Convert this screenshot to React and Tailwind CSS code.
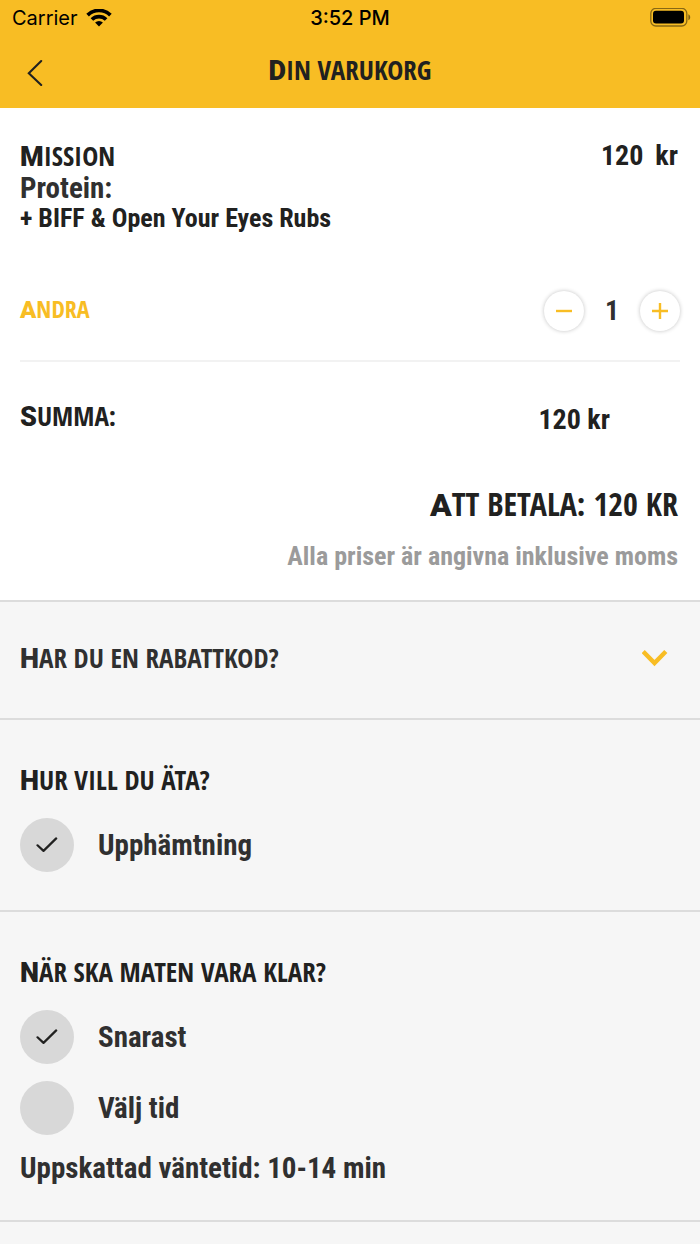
import { useState } from 'react';

const UNIT_PRICE = 120;

function DisplayText({ as: Tag = 'h2', className = '', children }) {
  return (
    <Tag
      className={`font-[family-name:'Open_Sans_Condensed','Roboto_Condensed',sans-serif] font-extrabold uppercase first-letter:font-[family-name:Roboto] first-letter:leading-none first-letter:font-black ${className}`}
    >
      {children}
    </Tag>
  );
}

function WifiIcon() {
  return (
    <svg viewBox="0 0 26 19" className="h-[19px] w-[26px]" aria-hidden="true">
      <g fill="none" stroke="#000" strokeWidth="3.7">
        <path d="M1.6 6.1a16.2 16.2 0 0 1 22.8 0" />
        <path d="M5.9 10.5a10.1 10.1 0 0 1 14.2 0" />
      </g>
      <path d="M13 17.4l-3.9-3.9a5.6 5.6 0 0 1 7.8 0z" />
    </svg>
  );
}

function BatteryIcon() {
  return (
    <svg viewBox="0 0 42 20" className="h-5 w-[42px]" aria-hidden="true">
      <rect x="0.8" y="0.4" width="36" height="17.6" rx="5" fill="none" stroke="#000" strokeOpacity="0.45" strokeWidth="1.3" />
      <rect x="3" y="2.8" width="31" height="12.8" rx="3" />
      <path d="M38.4 6.2c2.4 1 2.4 5 0 6z" fillOpacity="0.5" />
    </svg>
  );
}

function Option({ name, label, checked }) {
  return (
    <label className="flex items-center gap-6 text-[29px] leading-8 font-bold text-[#303030]">
      <span className="grid size-[54px] place-items-center">
        <input
          type="radio"
          name={name}
          defaultChecked={checked}
          className="peer col-start-1 row-start-1 size-[54px] appearance-none rounded-full bg-[#d8d8d8]"
        />
        <svg
          viewBox="0 0 22 16"
          className="pointer-events-none col-start-1 row-start-1 hidden h-4 w-[22px] peer-checked:block"
          fill="none"
          stroke="#212120"
          strokeWidth="2.2"
          strokeLinecap="round"
          strokeLinejoin="round"
          aria-hidden="true"
        >
          <path d="M1.5 8.3l6 5.6L20.2 1.4" />
        </svg>
      </span>
      {label}
    </label>
  );
}

function StepButton({ label, onClick, children }) {
  return (
    <button
      type="button"
      aria-label={label}
      onClick={onClick}
      className="grid size-10 place-items-center rounded-full bg-white shadow-[0_0_4px_rgba(0,0,0,0.24)]"
    >
      <svg viewBox="0 0 16 16" className="size-4" stroke="#f8bd24" strokeWidth="2.4" aria-hidden="true">
        {children}
      </svg>
    </button>
  );
}

export default function App() {
  const [count, setCount] = useState(1);
  const total = UNIT_PRICE * count;

  return (
    <div className="flex min-h-screen flex-col bg-[#f6f6f6] font-[family-name:'Roboto_Condensed','Liberation_Sans',sans-serif] text-[#212120]">
      <header className="bg-[#f8bd24]">
        <div className="grid h-9 grid-cols-[1fr_auto_1fr] items-center px-3 font-[family-name:Inter,sans-serif] text-xl text-black">
          <div className="flex items-center gap-2">
            <span>Carrier</span>
            <WifiIcon />
          </div>
          <span className="font-medium">3:52 PM</span>
          <div className="-mr-1 flex justify-end">
            <BatteryIcon />
          </div>
        </div>
        <div className="grid h-[72px] grid-cols-[1fr_auto_1fr] items-center px-6">
          <button type="button" aria-label="Tillbaka" className="justify-self-start">
            <svg viewBox="0 0 20 28" className="h-7 w-5" fill="none" stroke="#212120" strokeWidth="2.1" strokeLinecap="round" aria-hidden="true">
              <path d="M17.2 3L4.8 15.2L17.2 27" />
            </svg>
          </button>
          <DisplayText as="h1" className="pb-1 text-[27px] leading-8">Din varukorg</DisplayText>
        </div>
      </header>

      <main>
        <section className="bg-white px-5 pt-8 pb-7">
          <article className="border-b-2 border-[#f2f2f2] pb-[29px]">
            <div className="flex justify-between">
              <DisplayText className="text-[27px] leading-8">Mission</DisplayText>
              <p className="flex gap-3 pr-0.5 text-[28px] leading-8 font-bold">
                <span>{total}</span>
                <span>kr</span>
              </p>
            </div>
            <p className="text-[29px] leading-8 font-bold text-[#303030]">Protein:</p>
            <p className="text-[26px] leading-7 font-bold">+ BIFF &amp; Open Your Eyes Rubs</p>
            <div className="mt-[59px] flex justify-between">
              <button type="button" className="flex text-[#f8bd24]">
                <DisplayText as="span" className="block text-[24px] leading-9">Andra</DisplayText>
              </button>
              <div className="flex items-center">
                <StepButton label="Minska antal" onClick={() => setCount(Math.max(1, count - 1))}>
                  <path d="M0 8h16" />
                </StepButton>
                <span className="w-14 text-center text-[28px] leading-8 font-bold text-[#303030]">{count}</span>
                <StepButton label="Öka antal" onClick={() => setCount(count + 1)}>
                  <path d="M0 8h16M8 0v16" />
                </StepButton>
              </div>
            </div>
          </article>

          <div className="mt-[38px] flex justify-between">
            <DisplayText className="text-[27px] leading-8">Summa:</DisplayText>
            <p className="mr-[70px] pt-1 text-[28px] leading-8 font-bold">{total} kr</p>
          </div>
          <DisplayText as="p" className="mt-12 pr-0.5 text-right text-[32px] leading-10">Att betala: {total} kr</DisplayText>
          <p className="mt-4 pr-0.5 text-right text-[26px] leading-8 font-bold text-[#9b9b9b]">
            Alla priser är angivna inklusive moms
          </p>
        </section>

        <section className="border-t-2 border-[#dcdcdc]">
          <button type="button" aria-expanded="false" className="flex w-full items-center justify-between pt-9 pr-8 pb-10 pl-5 text-[#303030]">
            <DisplayText as="span" className="block text-[27px] leading-10">Har du en rabattkod?</DisplayText>
            <svg viewBox="0 0 26 18" className="h-[18px] w-[26px]" fill="none" stroke="#f8bd24" strokeWidth="4.4" aria-hidden="true">
              <path d="M1.2 2.5L12.5 14L23.8 2.5" />
            </svg>
          </button>
        </section>

        <section className="border-t-2 border-[#dcdcdc] px-5 pt-10 pb-[38px]">
          <DisplayText className="text-[27px] leading-10">Hur vill du äta?</DisplayText>
          <div className="mt-[18px]">
            <Option name="delivery" label="Upphämtning" checked />
          </div>
        </section>

        <section className="border-t-2 border-[#dcdcdc] px-5 pt-10 pb-9">
          <DisplayText className="text-[27px] leading-10">När ska maten vara klar?</DisplayText>
          <div className="mt-[18px] flex flex-col gap-[17px]">
            <Option name="time" label="Snarast" checked />
            <Option name="time" label="Välj tid" />
            <p className="text-[29px] leading-8 font-bold text-[#303030]">Uppskattad väntetid: 10-14 min</p>
          </div>
        </section>

        <div className="border-t-2 border-[#dcdcdc]" />
      </main>
    </div>
  );
}
